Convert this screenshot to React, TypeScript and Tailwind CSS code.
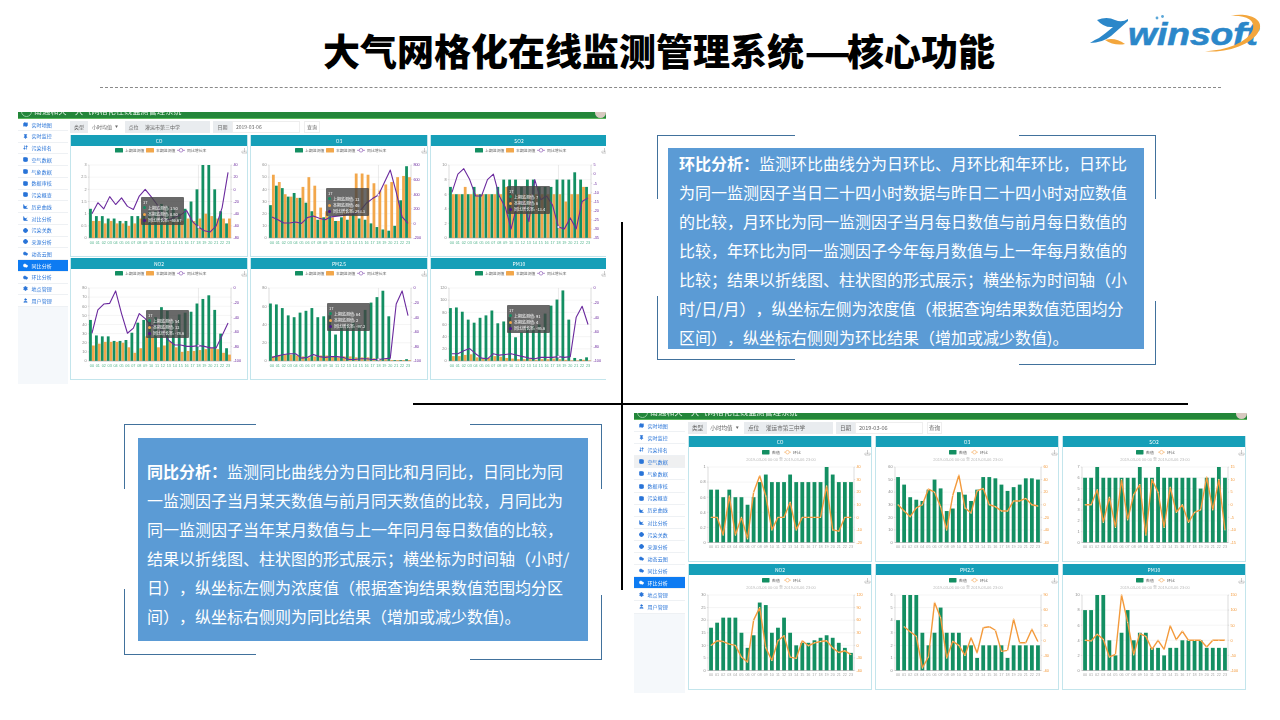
import {
  ArrowDownUp,
  Cloud,
  Globe,
  LineChart,
  Map,
  Pin,
  Settings,
  Table,
  User,
} from "lucide-react";

const GREEN = "#138f62";
const ORANGE = "#f2a74b";
const PURPLE = "#6b2a9e";
const LINE_ORANGE = "#f39a3c";

const HOURS = Array.from({ length: 24 }, (_, i) => String(i).padStart(2, "0"));

type ChartData = {
  name: string;
  left: string[];
  right: string[];
  bars: number[];
  bars2?: number[];
  line: (number | null)[];
  tip?: { left: string; top: string; a: string; b: string; c: string };
};

const compareCharts: ChartData[] = [
  {
    name: "CO",
    left: ["0", "0.5", "1", "1.5", "2", "2.5", "3"],
    right: ["-80", "-60", "-40", "-20", "0", "20", "40"],
    bars: [1.2, 0.9, 0.9, 0.8, 0.8, 0.7, 0.7, 0.9, 0.9, 1, 1.1, 1.1, 1.4, 1.3, 1.2, 1, 1.2, 1.5, 2, 3, 3, 2, 1.1, 0.6],
    bars2: [0.7, 0.7, 0.6, 0.7, 0.6, 0.6, 0.5, 0.6, 0.8, 0.8, 0.7, 0.7, 0.7, 0.7, 0.7, 0.7, 0.8, 0.7, 0.8, 1, 0.9, 0.8, 0.8, 0.8],
    line: [-40, -22, -32, -12, -25, -14, -28, -33, -11, 0, -12, -25, -50, -50, -46, -42, -35, -53, -62, -68, -70, -60, -30, 28],
    tip: { left: "left-[70px]", top: "top-[62px]", a: "1.50", b: "0.80", c: "-46.67" },
  },
  {
    name: "O3",
    left: ["0", "10", "20", "30", "40", "50", "60"],
    right: ["-200", "0", "200", "400", "600", "800"],
    bars: [27, 43, 41, 34, 37, 33, 29, 22, 15, 17, 18, 14, 17, 15, 20, 16, 15, 12, 9, 7, 6, 10, 31, 59],
    bars2: [52, 46, 36, 34, 33, 42, 50, 43, 25, 22, 17, 14, 22, 25, 53, 53, 52, 45, 39, 44, 46, 50, 51, 50],
    line: [88, 50, 5, 5, 20, 0, 80, 100, 70, 50, 90, 100, 110, 130, 130, 180, 280, 340, 390, 560, 730, 430, 90, 0],
    tip: { left: "left-[75px]", top: "top-[53px]", a: "12", b: "46", c: "293.3" },
  },
  {
    name: "SO2",
    left: ["0", "2", "4", "6", "8", "10"],
    right: ["-35", "-30", "-25", "-20", "-15", "-10", "-5", "0", "5"],
    bars: [7, 6, 6, 6, 7, 6, 6, 6, 7, 8, 8, 8, 7, 8, 8, 7, 7, 7, 8, 8, 8, 9, 8, 7],
    bars2: [6, 6, 7, 6, 6, 6, 6, 6, 6, 7, 6, 6, 6, 6, 6, 6, 6, 6, 6, 5, 6, 6, 7, 6],
    line: [-10, 0, 3, -3, -12, -12, -3, 0, -12, -18, -30, -17, -15, -26, -3, -14, -12, -17, -29, -30, -24, -30, -15, -13],
    tip: { left: "left-[76px]", top: "top-[51px]", a: "7", b: "6", c: "-13.4" },
  },
  {
    name: "NO2",
    left: ["0", "10", "20", "30", "40", "50", "60", "70", "80"],
    right: ["-100", "-80", "-60", "-40", "-20", "0"],
    bars: [45, 28, 27, 27, 22, 22, 23, 31, 42, 45, 44, 48, 59, 55, 44, 51, 53, 54, 63, 68, 72, 56, 30, 14],
    bars2: [17, 19, 21, 21, 21, 20, 15, 9, 14, 27, 26, 15, 17, 21, 15, 10, 11, 11, 12, 13, 14, 13, 9, 7],
    line: [-62, -30, -22, -21, -4, -35, -62, -55, -35, -42, -52, -50, -60, -72, -78, -78, -80, -80, -79, -80, -82, -82, -65, -48],
    tip: { left: "left-[75px]", top: "top-[52px]", a: "54", b: "12", c: "-78.6" },
  },
  {
    name: "PM2.5",
    left: ["0", "20", "40", "60", "80"],
    right: ["-100", "-80", "-60", "-40", "-20", "0"],
    bars: [63, 62, 58, 50, 48, 53, 55, 58, 48, 49, 50, 29, 38, 40, 42, 40, 56, 64, 70, 77, 49, 1, 1, 2],
    bars2: [5, 6, 7, 7, 6, 5, 4, 5, 6, 6, 5, 4, 5, 5, 4, 4, 4, 3, 2, 2, 1, 1, 1, 1],
    line: [-95, -93, -91, -90, -90, -96, -95, -91, -94, -95, -94, -94, -95, -98, -98, -97, -97, -98, -98, -97, -96, -22, -4, -38],
    tip: { left: "left-[76px]", top: "top-[45px]", a: "64", b: "2", c: "-97.2" },
  },
  {
    name: "PM10",
    left: ["0", "20", "40", "60", "80", "100", "120"],
    right: ["-100", "-80", "-60", "-40", "-20", "0"],
    bars: [87, 88, 81, 68, 63, 71, 75, 83, 62, 65, 72, 39, 47, 55, 58, 60, 78, 91, 101, 116, 68, 5, 3, 6],
    bars2: [8, 8, 10, 11, 6, 4, 5, 8, 7, 5, 4, 3, 3, 3, 2, 3, 3, 4, 3, 2, 1, 1, 2, 1],
    line: [-90, -90, -86, -83, -90, -96, -97, -90, -92, -91, -90, -92, -94, -96, -97, -95, -95, -95, -94, -95, -94, -40, -25, -50],
    tip: { left: "left-[76px]", top: "top-[47px]", a: "91", b: "4", c: "-95.6" },
  },
];

const ringCharts: ChartData[] = [
  {
    name: "CO",
    left: ["0", "0.2", "0.4", "0.6", "0.8", "1"],
    right: ["-20", "-10", "0", "10", "20", "30", "40"],
    bars: [0.7, 0.7, 0.6, 0.7, 0.6, 0.6, 0.5, 0.6, 0.8, 0.9, 0.8, 0.8, 0.8, 0.9, 0.8, 0.8, 0.8, 0.8, 0.8, 1, 0.9, 0.8, 0.8, 0.8],
    line: [0, 0, -14, 17, -14, 0, -17, 20, 33, 17, -10, 0, 0, 12, -10, 0, 0, 0, 0, 25, -10, -11, 0, 0],
  },
  {
    name: "O3",
    left: ["0", "10", "20", "30", "40", "50", "60"],
    right: ["-60", "-40", "-20", "0", "20", "40", "60"],
    bars: [52, 46, 36, 34, 33, 42, 50, 43, 25, 27, 40, 38, 33, 42, 52, 52, 51, 46, 41, 44, 46, 51, 51, 50],
    line: [0, -10, -19, -5, 0, 25, 20, -3, -40, 15, 47, -5, -13, 22, 26, 0, -3, -10, -10, 6, 6, 10, 0, -2],
  },
  {
    name: "SO2",
    left: ["0", "1", "2", "3", "4", "5", "6", "7"],
    right: ["-15", "-10", "-5", "0", "5", "10", "15"],
    bars: [6, 6, 7, 6, 6, 6, 6, 6, 6, 7, 6, 6, 7, 6, 6, 6, 6, 6, 6, 5, 6, 6, 7, 6],
    line: [0, 0, 6, -7, 3, -9, 10, -6, 4, 8, -12, 10, 5, -9, 7, -3, 0, -7, -3, -2, 11, -2, 10, -10],
  },
  {
    name: "NO2",
    left: ["0", "5", "10", "15", "20", "25", "30"],
    right: ["-60", "-30", "0", "30", "60", "90", "120"],
    bars: [17, 19, 21, 21, 21, 15, 9, 14, 27, 26, 15, 17, 21, 15, 10, 11, 11, 12, 13, 14, 13, 11, 9, 7],
    line: [0, 11, 9, 3, 0, -28, -40, 60, 90, -6, -36, 11, 23, -28, -31, 11, -1, 6, 9, 11, -6, -17, -13, -22],
  },
  {
    name: "PM2.5",
    left: ["0", "1", "2", "3", "4", "5", "6"],
    right: ["-60", "-30", "0", "30", "60", "90"],
    bars: [4, 6, 6, 6, 3, 2, 3, 5, 3, 3, 3, 2, 2, 1, 2, 2, 2, 2, 1, 2, 2, 2, 2, 2],
    line: [null, 27, 17, 8, -55, -33, 75, 45, -35, -2, -10, -30, 5, -25, 25, 27, 20, -22, -20, 42, -5, -5, 22, -3],
  },
  {
    name: "PM10",
    left: ["0", "2", "4", "6", "8", "10"],
    right: ["-100", "-50", "0", "50", "100", "150"],
    bars: [8, 8, 10, 10, 4, 2, 5, 8, 4, 5, 5, 3, 3, 2, 3, 3, 4, 4, 4, 4, 3, 3, 3, 3],
    line: [0, -2, 20, 3, -55, -47, 150, 60, -48, 22, 13, -30, 0, -30, 48, 2, 30, 0, 0, 0, -22, 0, 0, 0],
  },
];

const MENU = [
  { label: "实时地图", icon: Map },
  { label: "实时监控", icon: Pin },
  { label: "污染排名", icon: ArrowDownUp },
  { label: "空气数据", icon: Table },
  { label: "气象数据", icon: Table },
  { label: "数据审核", icon: Table },
  { label: "污染概查", icon: Table },
  { label: "历史曲线", icon: LineChart },
  { label: "对比分析", icon: LineChart },
  { label: "污染关数", icon: Globe },
  { label: "来源分析", icon: Globe },
  { label: "动态云图", icon: Cloud },
  { label: "同比分析", icon: Cloud },
  { label: "环比分析", icon: Cloud },
  { label: "地点管理", icon: Settings },
  { label: "用户管理", icon: User },
];

const Sidebar = ({ active, hover, rowClass }: { active: string; hover?: string; rowClass: string }) => {
  return (
    <div className="h-full shrink-0 bg-[#f5f8fb]">
      {MENU.map((m) => (
        <div
          key={m.label}
          className={`${rowClass} flex items-center gap-[3.5px] pl-[5px] border-b border-[#eef1f4] text-[5px] tracking-[0.1px] ${
            m.label === active
              ? "bg-[#0d7bf2] text-white"
              : m.label === hover
                ? "bg-[#eff0f1] text-[#2a75d8]"
                : "bg-white text-[#2a75d8]"
          }`}
        >
          <m.icon size={5} strokeWidth={3} fill="currentColor" />
          <span>{m.label}</span>
        </div>
      ))}
    </div>
  );
};

const Toolbar = ({ big }: { big?: boolean }) => {
  const text = big ? "text-[5.6px]" : "text-[5px]";
  return (
    <div className={`flex items-stretch h-[12px] ${text} text-[#666666]`}>
      <span className={`${big ? "w-[19px]" : "w-[18px]"} flex items-center justify-center bg-[#e9ecef]`}>类型</span>
      <span className={`${big ? "w-[35px]" : "w-[34px]"} flex items-center justify-center gap-[3px] bg-white`}>
        小时均值<span className="text-[3px]">▼</span>
      </span>
      <span className={`${big ? "w-[19px] ml-[2px]" : "w-[17px] ml-[3px]"} flex items-center justify-center bg-[#e9ecef]`}>点位</span>
      <span className={`${big ? "w-[70px]" : "w-[68px]"} flex items-center pl-[3px] bg-[#e9ecef]`}>灌运市第三中学</span>
      <span className="w-[19px] ml-[3px] flex items-center justify-center bg-[#e9ecef]">日期</span>
      <span className="w-[68px] flex items-center pl-[3px] bg-white border border-[#eeeeee]">2019-03-06</span>
      <span className={`${big ? "w-[15px]" : "w-[16px]"} ml-[4px] flex items-center justify-center bg-white border border-[#eeeeee]`}>查询</span>
    </div>
  );
};

const Axis = ({
  labels,
  x,
  y0,
  y1,
  color,
  anchor,
  tick,
}: {
  labels: string[];
  x: number;
  y0: number;
  y1: number;
  color: string;
  anchor: "start" | "end";
  tick: number;
}) => {
  return (
    <g>
      <line x1={x} x2={x} y1={y0} y2={y1} stroke="#bbbbbb" strokeWidth={0.5} />
      {labels.map((l, i) => {
        const y = y1 - (i / (labels.length - 1)) * (y1 - y0);
        return (
          <g key={l}>
            <line x1={x} x2={x + tick} y1={y} y2={y} stroke="#bbbbbb" strokeWidth={0.4} />
            <text x={x + tick * 2} y={y + 1.3} fontSize={3.8} fill={color} textAnchor={anchor}>
              {l}
            </text>
          </g>
        );
      })}
    </g>
  );
};

const DownloadIcon = ({ x, y }: { x: number; y: number }) => (
  <path
    d={`M${x} ${y + 5}h5M${x} ${y + 3}v2M${x + 5} ${y + 3}v2M${x + 2.5} ${y}v4M${x + 1} ${y + 2.5}l1.5 1.5 1.5-1.5`}
    stroke="#aaaaaa"
    strokeWidth={0.6}
    fill="none"
  />
);

const Chart = ({
  c,
  w,
  h,
  x0,
  x1,
  y0,
  y1,
  mode,
}: {
  c: ChartData;
  w: number;
  h: number;
  x0: number;
  x1: number;
  y0: number;
  y1: number;
  mode: "compare" | "ring";
}) => {
  const slot = (x1 - x0) / 24;
  const lmax = parseFloat(c.left[c.left.length - 1]);
  const rmin = parseFloat(c.right[0]);
  const rmax = parseFloat(c.right[c.right.length - 1]);
  const yl = (v: number) => y1 - (v / lmax) * (y1 - y0);
  const yr = (v: number) => y1 - ((v - rmin) / (rmax - rmin)) * (y1 - y0);
  const pts = c.line
    .map((v, i) => (v === null ? null : [x0 + (i + 0.5) * slot, yr(v)]))
    .filter((p): p is number[] => p !== null);
  const compare = mode === "compare";
  const mid = w / 2;

  return (
    <svg viewBox={`0 0 ${w} ${h}`} width={w} height={h} className="block font-['Liberation_Sans','Noto_Sans_CJK_SC',sans-serif]">
      {compare ? (
        <g fontSize={3.9} fill="#666666">
          <rect x={mid - 45} y={2} width={8} height={4.6} rx={0.6} fill={GREEN} />
          <text x={mid - 35} y={5.8}>上期监测值</text>
          <rect x={mid - 14} y={2} width={8} height={4.6} rx={0.6} fill={ORANGE} />
          <text x={mid - 4} y={5.8}>本期监测值</text>
          <line x1={mid + 17} x2={mid + 25} y1={4.3} y2={4.3} stroke={PURPLE} strokeWidth={0.5} />
          <circle cx={mid + 21} cy={4.3} r={1.8} fill="white" stroke={PURPLE} strokeWidth={0.5} />
          <text x={mid + 27} y={5.8}>同比增长率</text>
        </g>
      ) : (
        <g fontSize={3.9} fill="#666666">
          <rect x={mid - 19} y={3} width={7.5} height={4.4} rx={0.6} fill={GREEN} />
          <text x={mid - 9} y={6.6}>数值</text>
          <line x1={mid + 3} x2={mid + 10} y1={5.2} y2={5.2} stroke={LINE_ORANGE} strokeWidth={0.5} />
          <circle cx={mid + 6.5} cy={5.2} r={1.8} fill="white" stroke={LINE_ORANGE} strokeWidth={0.5} />
          <text x={mid + 12} y={6.6}>环比</text>
          <text x={mid} y={13.5} fontSize={4} fill="#bbbbbb" textAnchor="middle">
            2019-03-06 00:00 至 2019-03-06 23:00
          </text>
        </g>
      )}
      <DownloadIcon x={compare ? 171 : w - 8} y={compare ? 2 : 3} />

      {c.left.map((_, i) => {
        const y = y1 - (i / (c.left.length - 1)) * (y1 - y0);
        return <line key={i} x1={x0} x2={x1} y1={y} y2={y} stroke="#eaeaea" strokeWidth={0.5} />;
      })}
      <Axis labels={c.left} x={x0} y0={y0} y1={y1} color="#888888" anchor="end" tick={-1.2} />
      <Axis labels={c.right} x={x1} y0={y0} y1={y1} color={compare ? PURPLE : LINE_ORANGE} anchor="start" tick={1.2} />

      {compare && (
        <line x1={x0 + 18.5 * slot} x2={x0 + 18.5 * slot} y1={y0} y2={y1} stroke="#cccccc" strokeWidth={0.4} />
      )}

      {c.bars.map((v, i) => {
        const cx = x0 + (i + 0.5) * slot;
        if (compare) {
          return (
            <g key={i}>
              <rect x={cx - 2.9} y={yl(v)} width={2.8} height={y1 - yl(v)} fill={GREEN} />
              <rect x={cx} y={yl(c.bars2![i])} width={2.8} height={y1 - yl(c.bars2![i])} fill={ORANGE} />
            </g>
          );
        }
        return <rect key={i} x={cx - 1.9} y={yl(v)} width={3.8} height={y1 - yl(v)} fill={GREEN} />;
      })}

      <polyline
        points={pts.map((p) => p.join(",")).join(" ")}
        fill="none"
        stroke={compare ? PURPLE : LINE_ORANGE}
        strokeWidth={compare ? 1.1 : 1.4}
        strokeLinejoin="round"
      />
      {compare ? (
        <circle
          cx={x0 + 18.5 * slot}
          cy={yr(c.line[18] as number)}
          r={1.2}
          fill="white"
          stroke={PURPLE}
          strokeWidth={0.4}
        />
      ) : (
        pts.map((p, i) => <circle key={i} cx={p[0]} cy={p[1]} r={0.5} fill="#fff3e0" />)
      )}

      <line x1={x0} x2={x1} y1={y1} y2={y1} stroke="#999999" strokeWidth={0.5} />
      {HOURS.map((hr, i) => (
        <text
          key={hr}
          x={x0 + (i + 0.5) * slot}
          y={y1 + 5.5}
          fontSize={3.8}
          fill={compare ? "#55b58e" : "#aaaaaa"}
          textAnchor="middle"
        >
          {hr}
        </text>
      ))}
    </svg>
  );
};

const TipRow = ({ dot, text }: { dot: string; text: string }) => (
  <div className="flex items-center gap-[2px] whitespace-nowrap">
    <span className={`w-[3px] h-[3px] rounded-full ${dot}`} />
    {text}
  </div>
);

const Tooltip = ({ tip }: { tip: NonNullable<ChartData["tip"]> }) => {
  return (
    <div
      className={`absolute ${tip.left} ${tip.top} w-[43px] h-[28px] rounded-[1px] bg-[#444444]/80 text-white text-[4px] leading-[6.2px] px-[2px] py-[1.5px]`}
    >
      <div>17</div>
      <TipRow dot="bg-[#138f62]" text={`上期监测值: ${tip.a}`} />
      <TipRow dot="bg-[#f2a74b]" text={`本期监测值: ${tip.b}`} />
      <TipRow dot="bg-[#4b148c]" text={`同比增长率: ${tip.c}`} />
    </div>
  );
};

const Panel = ({
  c,
  w,
  h,
  plot,
  mode,
}: {
  c: ChartData;
  w: number;
  h: number;
  plot: [number, number, number, number];
  mode: "compare" | "ring";
}) => {
  return (
    <div className="relative overflow-hidden bg-white border border-[#c3e5ec] border-t-0">
      <div className="h-[11px] flex items-center justify-center bg-[#169fb8] text-white text-[5px] -mx-px">
        {c.name}
      </div>
      <Chart c={c} w={w} h={h} x0={plot[0]} x1={plot[1]} y0={plot[2]} y1={plot[3]} mode={mode} />
      {c.tip && <Tooltip tip={c.tip} />}
    </div>
  );
};

const TopBar = () => {
  return (
    <div className="h-[7px] flex items-start justify-between pl-[3px] overflow-hidden bg-[#23863a] border-b border-[#5cb85c]">
      <div className="flex items-start gap-[2px] -mt-[6px]">
        <div className="w-[11px] h-[11px] rounded-full border border-[#8fc79b]" />
        <div className="text-white/90 text-[8px] leading-[10px] tracking-[0.2px] whitespace-nowrap">
          南通和天·大气网格化在线监测管理系统
        </div>
      </div>
      <div className="w-[11px] h-[11px] -mt-[5px] rounded-full bg-[#d8c9c0]" />
    </div>
  );
};

const CompareScreen = () => {
  return (
    <div className="shrink-0 w-[588px] h-[272px] overflow-hidden bg-white blur-[0.45px]">
      <TopBar />
      <div className="flex h-[265px]">
        <div className="w-[50px] shrink-0">
          <Sidebar active="同比分析" rowClass="h-[11.75px]" />
        </div>
        <div className="ml-[2px] flex-1 pt-[2px]">
          <Toolbar />
          <div className="mt-[2px] grid grid-cols-[178px_178px_178px] grid-rows-[122px_122px] gap-x-[2px] gap-y-[1px]">
            {compareCharts.map((c) => (
              <Panel key={c.name} c={c} w={178} h={110} plot={[18, 160, 19, 92]} mode="compare" />
            ))}
          </div>
        </div>
      </div>
    </div>
  );
};

const RingScreen = () => {
  return (
    <div className="shrink-0 w-[613px] h-[280px] overflow-hidden bg-white blur-[0.45px]">
      <TopBar />
      <div className="flex h-[273px]">
        <div className="w-[51px] shrink-0">
          <Sidebar active="环比分析" hover="空气数据" rowClass="h-[12.1px]" />
        </div>
        <div className="ml-[3px] flex-1 pt-[2px]">
          <Toolbar big />
          <div className="mt-[2px] grid grid-cols-[184px_184px_184px] grid-rows-[126px_126px] gap-x-[3px] gap-y-[2px]">
            {ringCharts.map((c) => (
              <Panel key={c.name} c={c} w={184} h={114} plot={[19, 165, 20, 95.5]} mode="ring" />
            ))}
          </div>
        </div>
      </div>
    </div>
  );
};

const Callout = ({
  className,
  boxClass,
  lead,
  lines,
  brackets,
}: {
  className: string;
  boxClass: string;
  lead: string;
  lines: string[];
  brackets: string[];
}) => {
  return (
    <div className={`relative shrink-0 ${className}`}>
      {brackets.map((b) => (
        <div key={b} className={`absolute border-[#41719c] ${b}`} />
      ))}
      <div className={`bg-[#5b9bd5] text-white text-[16px] leading-[29px] whitespace-nowrap [text-spacing-trim:space-all] ${boxClass}`}>
        {lines.map((l, i) => (
          <div key={i}>
            {i === 0 && <b className="font-bold">{lead}</b>}
            {l}
          </div>
        ))}
      </div>
    </div>
  );
};

const Logo = () => {
  return (
    <svg viewBox="0 0 210 60" width={210} height={60} className="absolute left-[1070px] top-0">
      <path
        d="M27 20 Q37 16 45 20 Q52 23 58 19 L58 21 L41 36 Q32 43 20 43 Q24 40 29 38 Q36 33 43 27 Q34 28 27 20Z"
        fill="#2b87c9"
      />
      <path d="M35 40 Q45 37 55 44 Q44 46 35 40Z" fill="#f3a63c" />
      <circle cx={87} cy={18} r={1.4} fill="#5ba7d8" />
      <circle cx={92.5} cy={16.5} r={1.4} fill="#5ba7d8" />
      <text
        x={58}
        y={45}
        fontSize={31}
        fontStyle="italic"
        fontWeight={700}
        fontFamily="'Liberation Sans', sans-serif"
        fill="#2b87c9"
        stroke="#2b87c9"
        strokeWidth={0.6}
        textLength={130}
        lengthAdjust="spacingAndGlyphs"
      >
        winsoft
      </text>
      <path
        d="M135 51 C155 54 186 44 190 28 C192 17 175 12 160 16 C176 15 185 20 183 29 C179 42 155 51 135 51Z"
        fill="#f3a63c"
      />
    </svg>
  );
};

export default function App() {
  return (
    <div className="relative flex flex-col w-[1280px] h-[720px] overflow-hidden bg-white font-['Noto_Sans_CJK_SC','Liberation_Sans',sans-serif]">
      <header className="h-[87px] shrink-0 pl-[323px] pt-[23px]">
        <h1 className="text-[37px] leading-[54px] font-black text-black whitespace-nowrap">
          大气网格化在线监测管理系统
          <span className="inline-block w-[43px] origin-left scale-x-[1.4]">—</span>
          核心功能
        </h1>
      </header>
      <Logo />
      <div className="ml-[100px] w-[1121px] shrink-0 border-t border-dashed border-[#8a8a8a]" />

      <div className="flex items-start h-[272px] shrink-0 mt-[24px] pl-[18px] gap-[51px]">
        <CompareScreen />
        <Callout
          className="w-[499px] h-[230px] mt-[23px]"
          boxClass="ml-[11px] mt-[13px] w-[476px] h-[201px] pl-[11px] pt-[1px]"
          lead="环比分析："
          brackets={[
            "left-0 top-0 w-[138px] h-[64px] border-t border-l",
            "right-0 top-0 w-[137px] h-[64px] border-t border-r",
            "left-0 top-[161px] w-[138px] h-[64px] border-b border-l",
            "right-0 bottom-0 w-[137px] h-[64px] border-b border-r",
          ]}
          lines={[
            "监测环比曲线分为日环比、月环比和年环比，日环比",
            "为同一监测因子当日二十四小时数据与昨日二十四小时对应数值",
            "的比较，月环比为同一监测因子当月每日数值与前月每日数值的",
            "比较，年环比为同一监测因子今年每月数值与上一年每月数值的",
            "比较；结果以折线图、柱状图的形式展示；横坐标为时间轴（小",
            "时/日/月），纵坐标左侧为浓度值（根据查询结果数值范围均分",
            "区间），纵坐标右侧则为环比结果（增加或减少数值)。",
          ]}
        />
      </div>

      <div className="flex items-start pl-[124px] gap-[32px]">
        <Callout
          className="w-[478px] h-[236px] mt-[40px]"
          boxClass="ml-[14px] mt-[14px] w-[450px] h-[203px] pl-[9px] pt-[19px]"
          lead="同比分析："
          brackets={[
            "left-0 top-0 w-[132px] h-[65px] border-t border-l",
            "right-0 top-0 w-[132px] h-[65px] border-t border-r",
            "left-0 top-[165px] w-[132px] h-[66px] border-b border-l",
            "right-0 bottom-0 w-[132px] h-[65px] border-b border-r",
          ]}
          lines={[
            "监测同比曲线分为日同比和月同比，日同比为同",
            "一监测因子当月某天数值与前月同天数值的比较，月同比为",
            "同一监测因子当年某月数值与上一年同月每日数值的比较，",
            "结果以折线图、柱状图的形式展示；横坐标为时间轴（小时/",
            "日），纵坐标左侧为浓度值（根据查询结果数值范围均分区",
            "间），纵坐标右侧则为同比结果（增加或减少数值)。",
          ]}
        />
        <div className="mt-[29px]">
          <RingScreen />
        </div>
      </div>

      {/* cross lines */}
      <div className="absolute left-[621px] top-[222px] w-[2px] h-[368px] bg-black" />
      <div className="absolute left-[413px] top-[403px] w-[775px] h-[2px] bg-black" />
    </div>
  );
}
